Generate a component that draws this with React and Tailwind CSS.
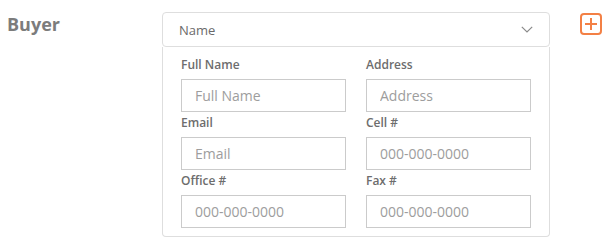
import { useState } from 'react'

const FIELDS = [
  { label: 'Full Name', placeholder: 'Full Name' },
  { label: 'Address', placeholder: 'Address' },
  { label: 'Email', placeholder: 'Email' },
  { label: 'Cell #', placeholder: '000-000-0000' },
  { label: 'Office #', placeholder: '000-000-0000' },
  { label: 'Fax #', placeholder: '000-000-0000' },
]

export default function App() {
  const [values, setValues] = useState({})

  return (
    <div className="min-h-screen bg-white font-['Open_Sans',sans-serif]">
      <div className="flex items-start pl-[7px] pt-[12px]">
        {/* Section label */}
        <div className="w-[155px] text-[18px] leading-[24px] font-bold text-[#7c7c7c]">Buyer</div>

        {/* Contact card */}
        <div className="w-[388px]">
          <div className="h-[35px] flex items-center justify-between px-[16px] border border-[#dedede] rounded-[4px] bg-white">
            <span className="text-[13px] leading-[18px] text-[#6a6a6a]">Name</span>
            <svg width="12" height="7" viewBox="0 0 12 7" fill="none">
              <path d="M0.8 0.8 L6 6 L11.2 0.8" stroke="#8a8a8a" strokeWidth="1.2" />
            </svg>
          </div>
          <div className="border-x border-b border-[#dedede] rounded-b-[4px] px-[18px] pt-[7px] pb-[8px]">
            <div className="grid grid-cols-2 gap-x-[20px]">
              {FIELDS.map((f) => (
                <div key={f.label}>
                  <label className="block mt-[2px] mb-[5px] text-[12px] leading-[18px] font-semibold text-[#6d6d6d]">
                    {f.label}
                  </label>
                  <input
                    value={values[f.label] || ''}
                    onChange={(e) => setValues({ ...values, [f.label]: e.target.value })}
                    placeholder={f.placeholder}
                    className="block w-full h-[33px] px-[13px] border border-[#cbcbcb] text-[14px] text-[#555] placeholder:text-[#9d9d9d] outline-none"
                  />
                </div>
              ))}
            </div>
          </div>
        </div>

        {/* Add button */}
        <button type="button" className="ml-[30px] mt-[1px] w-[22px] h-[22px] flex items-center justify-center border-2 border-[#f38045] rounded-[4px]">
          <svg width="14" height="14" viewBox="0 0 14 14" fill="none">
            <path d="M7 1 V13 M1 7 H13" stroke="#f38045" strokeWidth="2" />
          </svg>
        </button>
      </div>
    </div>
  )
}
